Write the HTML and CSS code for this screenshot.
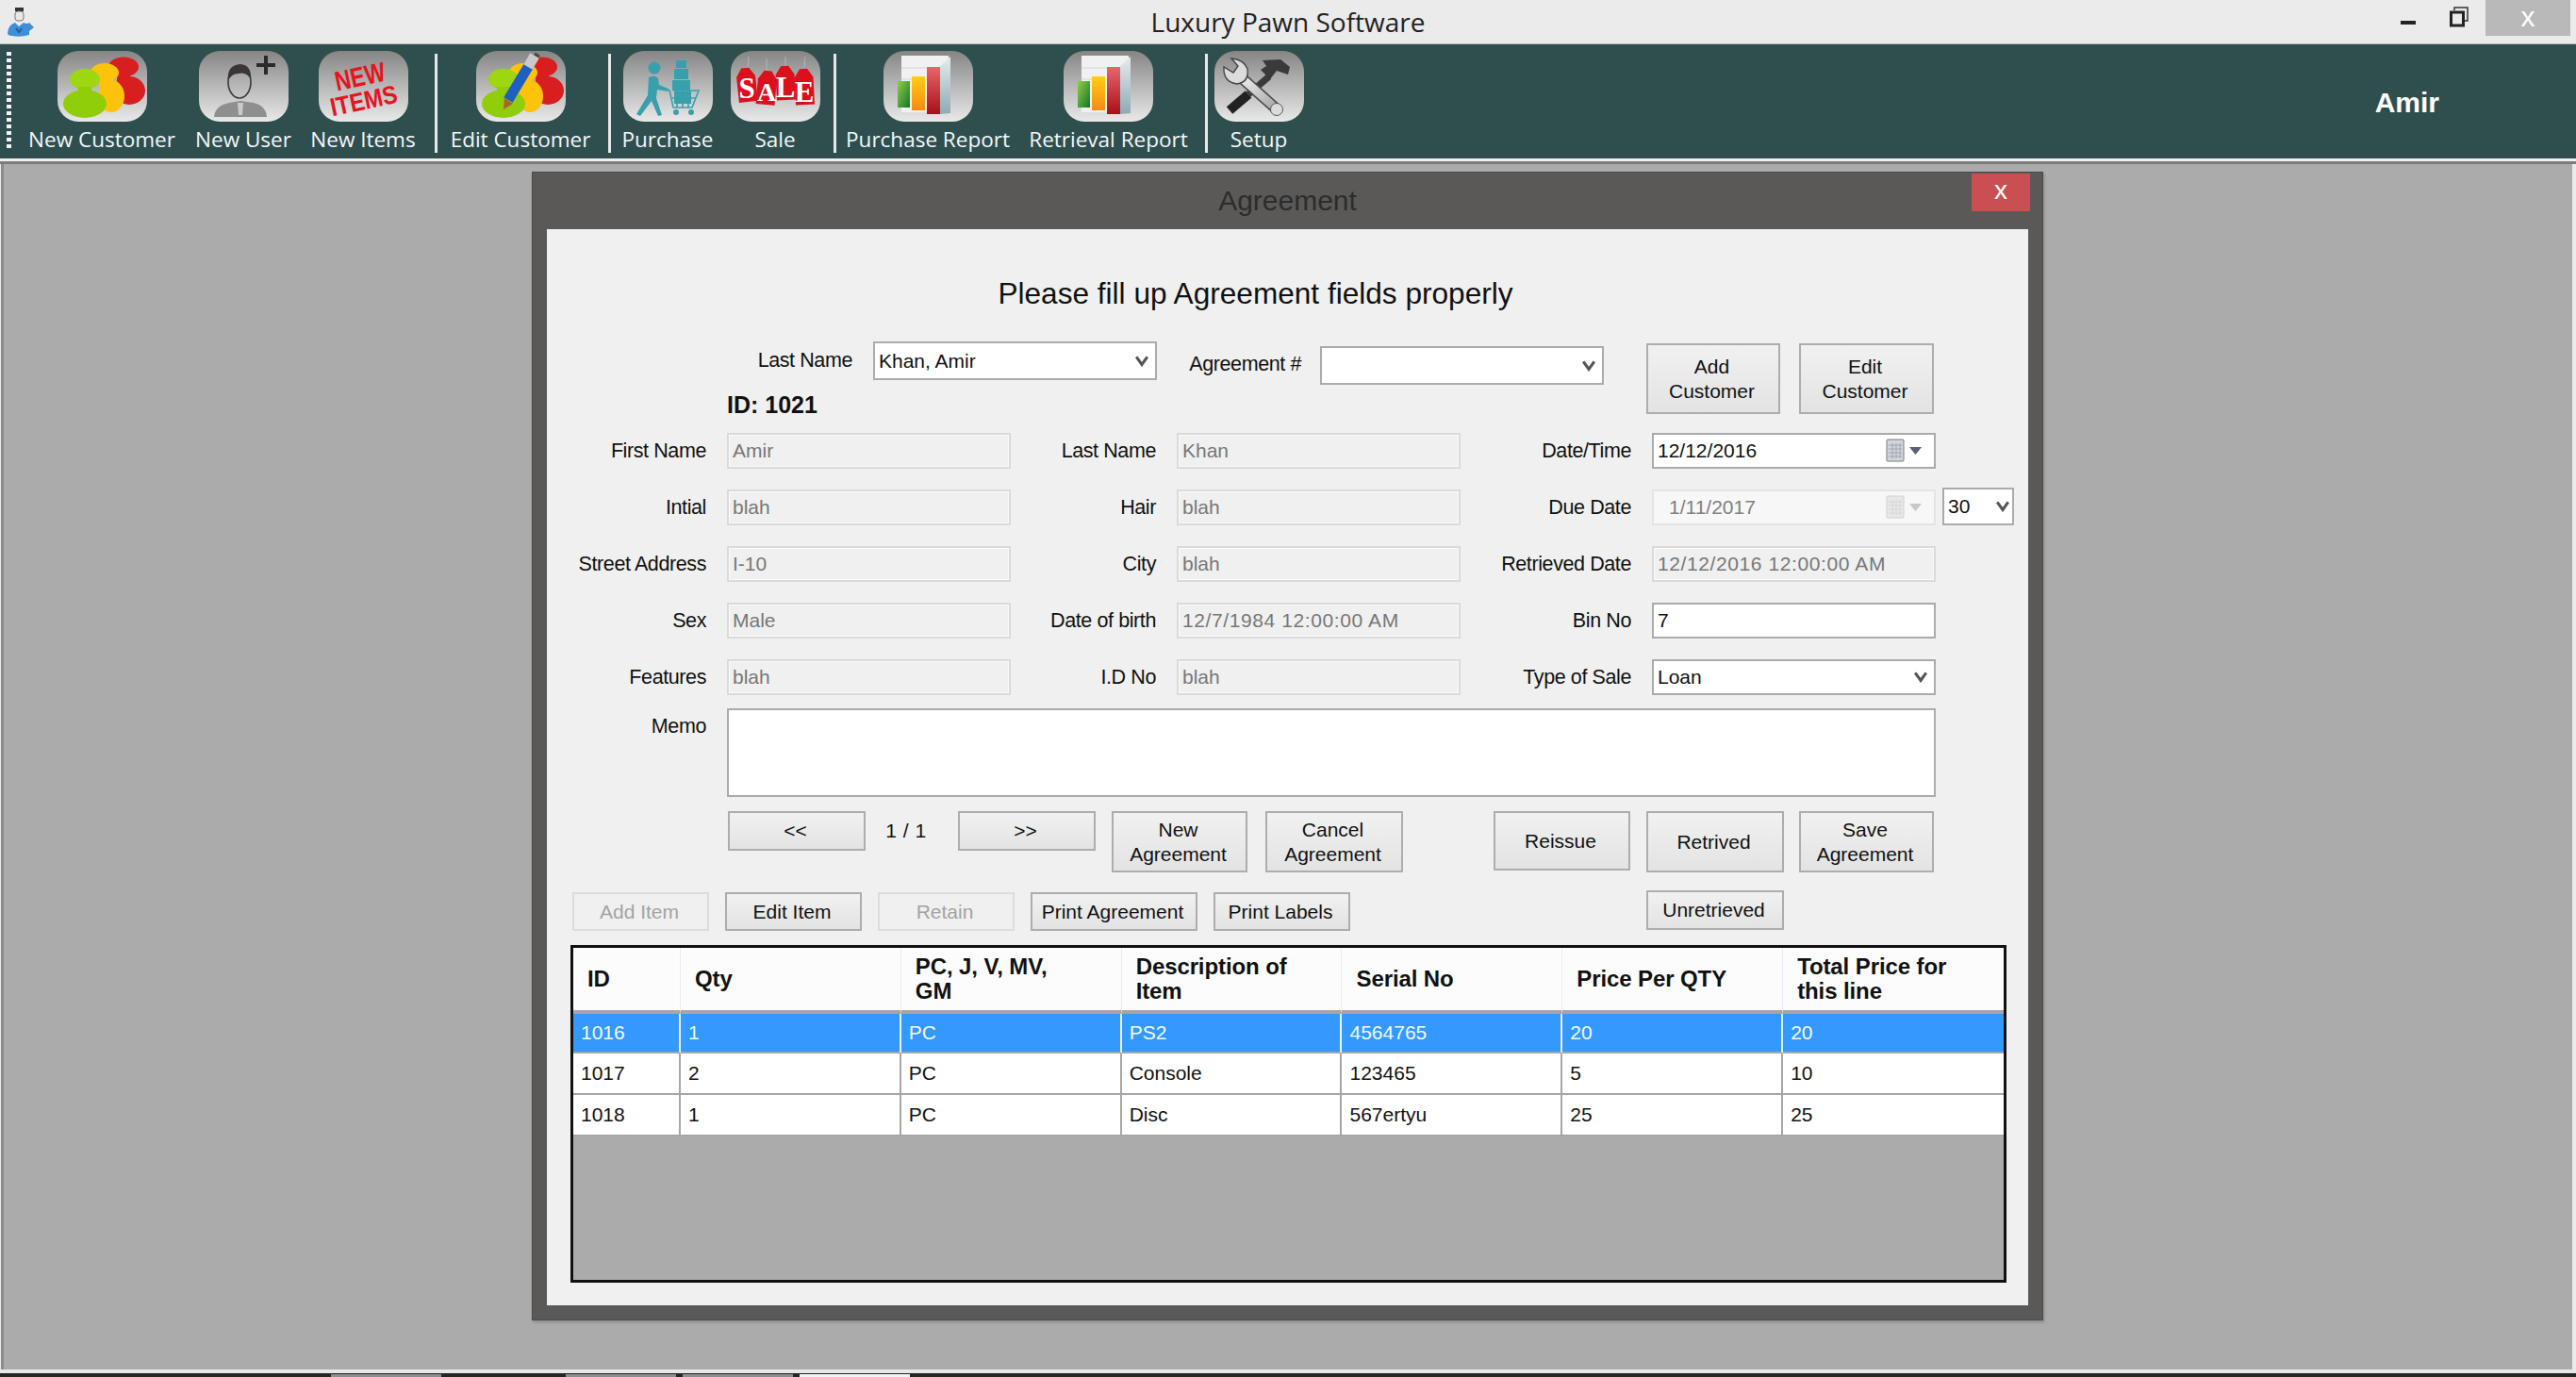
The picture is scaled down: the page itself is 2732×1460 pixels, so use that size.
FILE: index.html
```html
<!DOCTYPE html>
<html lang="en">
    <head>
        <meta charset="utf-8" />
        <title>Luxury Pawn Software</title>
        <link rel="stylesheet" href="styles.css">
    </head>
    <body>
        <!-- Window title bar -->
        <div class="titlebar">
            <svg class="app-icon" width="30" height="32" viewBox="0 0 30 32">
                <rect x="9" y="1" width="9" height="4" fill="#333"/>
                <rect x="9" y="5" width="9" height="10" rx="3" fill="#e8e8e8" stroke="#777"/>
                <path d="M1 28 Q2 19 9 17 L13 21 L18 17 Q22 19 24 17 L29 22 L24 26 L24 30 Q14 33 6 31 Q1 31 1 28Z" fill="#3f8fd8"/>
                <path d="M10 23 L13 27 L16 23" stroke="#1f5f9f" stroke-width="2" fill="none"/>
            </svg>
            <div class="app-title">Luxury Pawn Software</div>
            <div class="win-controls">
                <svg class="win-min" width="16" height="6"><rect width="16" height="4" y="1" fill="#222"/></svg>
                <svg class="win-restore" width="20" height="22" viewBox="0 0 20 22">
                    <path d="M5 4 V1 H19 V15 H15" fill="none" stroke="#333" stroke-width="1.5"/>
                    <rect x="1.5" y="6" width="13" height="14" fill="none" stroke="#222" stroke-width="3"/>
                </svg>
                <div class="win-close">x</div>
            </div>
        </div>

        <!-- Gradients shared by the report icons -->
        <svg class="defs" width="0" height="0">
            <defs>
                <linearGradient id="bar-green" x1="0" y1="0" x2="1" y2="1"><stop offset="0" stop-color="#8fcf45"/><stop offset="1" stop-color="#14752a"/></linearGradient>
                <linearGradient id="bar-orange" x1="0" y1="0" x2="0" y2="1"><stop offset="0" stop-color="#ffcf10"/><stop offset="1" stop-color="#f58a15"/></linearGradient>
                <linearGradient id="bar-red" x1="0" y1="0" x2="0" y2="1"><stop offset="0" stop-color="#e8656c"/><stop offset="1" stop-color="#a90f18"/></linearGradient>
                <linearGradient id="paper-side" x1="0" y1="0" x2="0" y2="1"><stop offset="0" stop-color="#e6ecee"/><stop offset="1" stop-color="#8fa9b3"/></linearGradient>
                <linearGradient id="wrench" x1="0" y1="0" x2="1" y2="1"><stop offset="0" stop-color="#f0f0f0"/><stop offset="1" stop-color="#a8a8a8"/></linearGradient>
            </defs>
        </svg>

        <!-- Main toolbar -->
        <div class="toolbar">
            <div class="gripper"></div>

            <div class="tool tool-new-customer">
                <div class="tool-icon">
                    <svg width="95" height="75" viewBox="0 0 95 75">
                        <g fill="#d81e1e">
                            <ellipse cx="70" cy="17" rx="16" ry="10.5"/>
                            <rect x="63" y="24" width="14" height="8"/>
                            <ellipse cx="76" cy="42" rx="17" ry="15"/>
                        </g>
                        <g fill="#fdc30a">
                            <ellipse cx="50" cy="23" rx="15" ry="10"/>
                            <rect x="44" y="30" width="13" height="8"/>
                            <ellipse cx="57" cy="48" rx="14" ry="17"/>
                        </g>
                        <g fill="#8fce08">
                            <ellipse cx="29" cy="30" rx="16" ry="11" fill="#9ed612"/>
                            <rect x="22" y="38" width="14" height="8"/>
                            <ellipse cx="29" cy="56" rx="23" ry="15"/>
                        </g>
                    </svg>
                </div>
                <div class="tool-label">New Customer</div>
            </div>
            <div class="tool tool-new-user">
                <div class="tool-icon">
                    <svg width="95" height="75" viewBox="0 0 95 75">
                        <path d="M71 5 V25 M61 15 H81" stroke="#2b2b2b" stroke-width="4"/>
                        <path d="M16 70 Q17 58 32 55 L44 53 L58 55 Q71 58 72 70Z" fill="#8f8f8f"/>
                        <path d="M41 55 L47 55 L46 68 L42 68Z" fill="#c9c9c9"/>
                        <ellipse cx="43" cy="33" rx="12" ry="17" fill="none" stroke="#3a3a3a" stroke-width="1.6"/>
                        <path d="M31 32 Q29 15 44 14 Q56 15 55 30 Q50 22 42 24 Q34 24 31 32Z" fill="#3a3636"/>
                    </svg>
                </div>
                <div class="tool-label">New User</div>
            </div>
            <div class="tool tool-new-items">
                <div class="tool-icon">
                    <svg width="95" height="75" viewBox="0 0 95 75">
                        <text x="44" y="37" transform="rotate(-12 44 28)" class="icon-text" font-size="29" textLength="54" lengthAdjust="spacingAndGlyphs" fill="#e5141f">NEW</text>
                        <text x="48" y="62" transform="rotate(-12 48 54)" class="icon-text" font-size="27" textLength="72" lengthAdjust="spacingAndGlyphs" fill="#e5141f">ITEMS</text>
                    </svg>
                </div>
                <div class="tool-label">New Items</div>
            </div>

            <div class="tool-sep sep-1"></div>

            <div class="tool tool-edit-customer">
                <div class="tool-icon">
                    <svg width="95" height="75" viewBox="0 0 95 75">
                        <g fill="#d81e1e">
                            <ellipse cx="70" cy="17" rx="16" ry="10.5"/>
                            <rect x="63" y="24" width="14" height="8"/>
                            <ellipse cx="76" cy="42" rx="17" ry="15"/>
                        </g>
                        <g fill="#fdc30a">
                            <ellipse cx="50" cy="23" rx="15" ry="10"/>
                            <rect x="44" y="30" width="13" height="8"/>
                            <ellipse cx="57" cy="48" rx="14" ry="17"/>
                        </g>
                        <g fill="#8fce08">
                            <ellipse cx="29" cy="30" rx="16" ry="11" fill="#9ed612"/>
                            <rect x="22" y="38" width="14" height="8"/>
                            <ellipse cx="29" cy="56" rx="23" ry="15"/>
                        </g>
                        <path d="M34 52 L58 12" stroke="#1f5fc4" stroke-width="11"/>
                        <path d="M55 17 L62 5" stroke="#c9c9c9" stroke-width="11"/>
                        <path d="M30 50 L29 62 L39 56Z" fill="#a8632f"/>
                        <path d="M67 6 L62 3" stroke="#444" stroke-width="3"/>
                    </svg>
                </div>
                <div class="tool-label">Edit Customer</div>
            </div>

            <div class="tool-sep sep-2"></div>

            <div class="tool tool-purchase">
                <div class="tool-icon">
                    <svg width="95" height="75" viewBox="0 0 95 75">
                        <g fill="#38a0ad">
                            <circle cx="33" cy="18" r="6.5"/>
                            <path d="M27 28 Q33 25 37 29 L38 36 L48 40 L48 43 L36 41 L35 50 L41 68 L37 69 L30 53 L18 69 L14 67 L26 47Z"/>
                            <rect x="56" y="10" width="11" height="8"/>
                            <rect x="54" y="19" width="15" height="11"/>
                            <rect x="52" y="31" width="19" height="11"/>
                            <rect x="54" y="43" width="18" height="13"/>
                            <circle cx="56" cy="65" r="3"/>
                            <circle cx="72" cy="65" r="3"/>
                        </g>
                        <path d="M49 41 L53 60 H73 L80 42 H53 M57 42 V60 M63 42 V60 M69 42 V60 M52 50 H77" fill="none" stroke="#38a0ad" stroke-width="1.6"/>
                    </svg>
                </div>
                <div class="tool-label">Purchase</div>
            </div>
            <div class="tool tool-sale">
                <div class="tool-icon">
                    <svg width="95" height="75" viewBox="0 0 95 75">
                        <path d="M18 18 L19 6 M38 21 L38 8 M58 16 L58 6 M78 18 L79 6" stroke="#b5b5b5"/>
                        <g fill="#dc0f1c">
                            <path transform="rotate(-6 17 36)" d="M7 27 L13 18 H21 L27 27 V54 H7Z"/>
                            <path transform="rotate(5 38 40)" d="M28 30 L34 21 H42 L48 30 V57 H28Z"/>
                            <path transform="rotate(-3 58 34)" d="M48 25 L54 16 H62 L68 25 V52 H48Z"/>
                            <path transform="rotate(-3 78 38)" d="M68 28 L74 19 H82 L88 28 V57 H68Z"/>
                        </g>
                        <text x="17" y="50" class="sale-text" font-size="31" fill="#fff">S</text>
                        <text x="38" y="53" class="sale-text" font-size="28" fill="#fff">A</text>
                        <text x="58" y="49" class="sale-text" font-size="31" fill="#fff">L</text>
                        <text x="78" y="54" class="sale-text" font-size="31" fill="#fff">E</text>
                    </svg>
                </div>
                <div class="tool-label">Sale</div>
            </div>

            <div class="tool-sep sep-3"></div>

            <div class="tool tool-purchase-report">
                <div class="tool-icon">
                    <svg width="95" height="75" viewBox="0 0 95 75">
                        <rect x="19" y="5" width="50" height="60" fill="#f1f1f1"/>
                        <path d="M19 18 H69 M19 30 H69" stroke="#d5d5d5"/>
                        <path d="M59 17 L71 6 V66 L59 67Z" fill="url(#paper-side)"/>
                        <rect x="15" y="32" width="13" height="28" fill="url(#bar-green)"/>
                        <rect x="30" y="27" width="14" height="36" fill="url(#bar-orange)"/>
                        <rect x="46" y="17" width="14" height="50" fill="url(#bar-red)"/>
                    </svg>
                </div>
                <div class="tool-label">Purchase Report</div>
            </div>
            <div class="tool tool-retrieval-report">
                <div class="tool-icon">
                    <svg width="95" height="75" viewBox="0 0 95 75">
                        <rect x="19" y="5" width="50" height="60" fill="#f1f1f1"/>
                        <path d="M19 18 H69 M19 30 H69" stroke="#d5d5d5"/>
                        <path d="M59 17 L71 6 V66 L59 67Z" fill="url(#paper-side)"/>
                        <rect x="15" y="32" width="13" height="28" fill="url(#bar-green)"/>
                        <rect x="30" y="27" width="14" height="36" fill="url(#bar-orange)"/>
                        <rect x="46" y="17" width="14" height="50" fill="url(#bar-red)"/>
                    </svg>
                </div>
                <div class="tool-label">Retrieval Report</div>
            </div>

            <div class="tool-sep sep-4"></div>

            <div class="tool tool-setup">
                <div class="tool-icon">
                    <svg width="95" height="75" viewBox="0 0 95 75">
                        <path d="M16 63 L36 46" stroke="#222" stroke-width="10"/>
                        <path d="M36 46 L58 27" stroke="#3a3a3a" stroke-width="7"/>
                        <path d="M51 10 L70 9 L80 17 L78 25 L66 21 L59 30 L49 20 L55 16Z" fill="#3a3a3a"/>
                        <path d="M27 27 L64 60" stroke="#4a4a4a" stroke-width="12"/>
                        <path d="M27 27 L64 60" stroke="url(#wrench)" stroke-width="9"/>
                        <path d="M10 17 Q9 33 24 35 Q37 33 35 19 Q31 9 18 8 L25 16 L20 23Z" fill="#dcdcdc" stroke="#444" stroke-width="1.4"/>
                        <circle cx="66" cy="62" r="6.5" fill="#dcdcdc" stroke="#555"/>
                    </svg>
                </div>
                <div class="tool-label">Setup</div>
            </div>

            <div class="user-name">Amir</div>
        </div>
        <div class="toolbar-edge"></div>

        <!-- MDI area -->
        <div class="mdi">
            <div class="dialog">
                <div class="dialog-title">
                    <div class="dialog-name">Agreement</div>
                    <div class="dialog-close">x</div>
                </div>
                <div class="client">
                    <div class="heading">Please fill up Agreement fields properly</div>

                    <div class="top-row">
                        <div class="top-left">
                            <div class="top-line">
                                <div class="label label-lookup">Last Name</div>
                                <div class="box combo">Khan, Amir<svg class="chevron" viewBox="0 0 12 10"><path d="M1 1 L6 8 L11 1" fill="none" stroke="#555" stroke-width="2.6"/></svg></div>
                            </div>
                            <div class="record-id">ID: 1021</div>
                        </div>
                        <div class="label label-agreement">Agreement #</div>
                        <div class="box combo combo-agreement"><svg class="chevron" viewBox="0 0 12 10"><path d="M1 1 L6 8 L11 1" fill="none" stroke="#555" stroke-width="2.6"/></svg></div>
                        <div class="btn btn-add-customer">Add<br>Customer</div>
                        <div class="btn btn-edit-customer">Edit<br>Customer</div>
                    </div>

                    <div class="fields">
                        <div class="label">First Name</div><div class="box off">Amir</div>
                        <div class="label">Last Name</div><div class="box off">Khan</div>
                        <div class="label">Date/Time</div>
                        <div class="box picker">12/12/2016
                            <svg class="cal" width="38" height="26" viewBox="0 0 38 26">
                                <rect x="1" y="1" width="18" height="23" rx="1" fill="#d3d5dc" stroke="#7a7a7a"/>
                                <path d="M3 7 H17 M3 11 H17 M3 15 H17 M3 19 H17 M7 5 V21 M11 5 V21 M15 5 V21" stroke="#a2a4b0"/>
                                <path d="M25 9 H38 L31.500 17Z" fill="#58607a"/>
                            </svg>
                        </div>
                        <div></div>

                        <div class="label">Intial</div><div class="box off">blah</div>
                        <div class="label">Hair</div><div class="box off">blah</div>
                        <div class="label">Due Date</div>
                        <div class="box picker picker-off">1/11/2017
                            <svg class="cal" width="38" height="26" viewBox="0 0 38 26">
                                <rect x="1" y="1" width="18" height="23" rx="1" fill="#e8e8e8" stroke="#d0d0d0"/>
                                <path d="M3 7 H17 M3 11 H17 M3 15 H17 M3 19 H17 M7 5 V21 M11 5 V21 M15 5 V21" stroke="#d6d6d6"/>
                                <path d="M25 9 H38 L31.500 17Z" fill="#c8c8c8"/>
                            </svg>
                        </div>
                        <div class="box combo combo-days">30<svg class="chevron" viewBox="0 0 12 10"><path d="M1 1 L6 8 L11 1" fill="none" stroke="#555" stroke-width="2.6"/></svg></div>

                        <div class="label">Street Address</div><div class="box off">I-10</div>
                        <div class="label">City</div><div class="box off">blah</div>
                        <div class="label">Retrieved Date</div><div class="box off date-value">12/12/2016 12:00:00 AM</div>
                        <div></div>

                        <div class="label">Sex</div><div class="box off">Male</div>
                        <div class="label">Date of birth</div><div class="box off date-value">12/7/1984 12:00:00 AM</div>
                        <div class="label">Bin No</div><div class="box">7</div>
                        <div></div>

                        <div class="label">Features</div><div class="box off">blah</div>
                        <div class="label">I.D No</div><div class="box off">blah</div>
                        <div class="label">Type of Sale</div>
                        <div class="box combo">Loan<svg class="chevron" viewBox="0 0 12 10"><path d="M1 1 L6 8 L11 1" fill="none" stroke="#555" stroke-width="2.6"/></svg></div>
                        <div></div>
                    </div>

                    <div class="memo-row">
                        <div class="label label-memo">Memo</div>
                        <div class="box memo"></div>
                    </div>

                    <div class="actions">
                        <div class="btn btn-pager">&lt;&lt;</div>
                        <div class="pager-text">1 / 1</div>
                        <div class="btn btn-pager">&gt;&gt;</div>
                        <div class="btn btn-new">New<br>Agreement</div>
                        <div class="btn btn-cancel">Cancel<br>Agreement</div>
                        <div class="btn btn-reissue">Reissue</div>
                        <div class="btn btn-retrived">Retrived</div>
                        <div class="btn btn-save">Save<br>Agreement</div>
                    </div>

                    <div class="items-bar">
                        <div class="btn btn-item disabled">Add Item</div>
                        <div class="btn btn-item">Edit Item</div>
                        <div class="btn btn-item disabled">Retain</div>
                        <div class="btn btn-print">Print Agreement</div>
                        <div class="btn btn-item">Print Labels</div>
                        <div class="btn btn-unretrieved">Unretrieved</div>
                    </div>

                    <div class="grid-box">
                        <table class="grid">
                            <colgroup>
                                <col class="col-id"><col class="col-wide"><col class="col-wide"><col class="col-wide"><col class="col-wide"><col class="col-wide"><col class="col-wide">
                            </colgroup>
                            <thead>
                                <tr>
                                    <th>ID</th>
                                    <th>Qty</th>
                                    <th>PC, J, V, MV,<br>GM</th>
                                    <th>Description of<br>Item</th>
                                    <th>Serial No</th>
                                    <th>Price Per QTY</th>
                                    <th>Total Price for<br>this line</th>
                                </tr>
                            </thead>
                            <tbody>
                                <tr class="selected"><td>1016</td><td>1</td><td>PC</td><td>PS2</td><td>4564765</td><td>20</td><td>20</td></tr>
                                <tr><td>1017</td><td>2</td><td>PC</td><td>Console</td><td>123465</td><td>5</td><td>10</td></tr>
                                <tr><td>1018</td><td>1</td><td>PC</td><td>Disc</td><td>567ertyu</td><td>25</td><td>25</td></tr>
                            </tbody>
                        </table>
                    </div>
                </div>
            </div>
        </div>

        <!-- Sliver of the taskbar at the bottom -->
        <div class="taskbar">
            <div class="task task-1"></div>
            <div class="task task-2"></div>
            <div class="task task-3"></div>
            <div class="task task-4"></div>
        </div>
    </body>
</html>
```
FILE: styles.css
```css
* {
    box-sizing: border-box;
}

body, html {
    margin: 0;
    padding: 0;
    height: 100%;
    overflow: hidden;
    font-family: "Liberation Sans", Arial, sans-serif;
    background: #ebebeb;
}

body {
    display: flex;
    flex-direction: column;
    height: 1460px;
}

.defs {
    position: absolute;
}

/* Window title bar */
.titlebar {
    height: 46px;
    flex: none;
    display: flex;
    align-items: flex-start;
    position: relative;
    background: #ebebeb;
}

.app-icon {
    margin: 7px 0 0 7px;
}

.app-title {
    position: absolute;
    left: 0;
    right: 0;
    top: 5px;
    text-align: center;
    font-family: "Open Sans", sans-serif;
    font-size: 28px;
    line-height: 36px;
    color: #222;
}

.win-controls {
    margin-left: auto;
    margin-right: 6px;
    display: flex;
    align-items: flex-start;
}

.win-min {
    margin-top: 21px;
    margin-right: 36px;
}

.win-restore {
    margin-top: 7px;
    margin-right: 18px;
}

.win-close {
    width: 90px;
    height: 38px;
    background: #b9b9b9;
    color: #fff;
    font-size: 30px;
    line-height: 35px;
    text-align: center;
}

/* Toolbar */
.toolbar {
    height: 122px;
    flex: none;
    display: flex;
    align-items: flex-start;
    padding-left: 22px;
    padding-right: 145px;
    position: relative;
    background: #2f4f4f;
    border-top: 1px solid #bdbdbd;
}

.gripper {
    position: absolute;
    left: 7px;
    top: 8px;
    width: 5px;
    height: 103px;
    background: repeating-linear-gradient(#f4f4f4 0, #f4f4f4 4px, #2f4f4f 4px, #2f4f4f 7px);
}

.tool {
    display: flex;
    flex-direction: column;
    align-items: center;
    padding-top: 7px;
    flex: none;
}

.tool-icon {
    width: 95px;
    height: 75px;
    border-radius: 22px;
    background: linear-gradient(#858585, #a9a9a9 35%, #e9e9e9);
}

.tool-icon svg {
    display: block;
    overflow: visible;
}

.icon-text {
    font-family: "Liberation Sans", sans-serif;
    font-weight: bold;
    text-anchor: middle;
}

.sale-text {
    font-family: "Liberation Serif", serif;
    font-weight: bold;
    text-anchor: middle;
}

.tool-label {
    margin-top: 4px;
    font-family: "Open Sans", sans-serif;
    font-size: 22.5px;
    line-height: 30px;
    color: #f2f8fa;
    white-space: nowrap;
}

.tool-new-customer { width: 172px; }
.tool-new-user { width: 128px; }
.tool-new-items { width: 126px; }
.tool-edit-customer { width: 156px; }
.tool-purchase { width: 104px; }
.tool-sale { width: 124px; }
.tool-purchase-report { width: 180px; }
.tool-retrieval-report { width: 203px; }
.tool-setup { width: 100px; }

.tool-sep {
    width: 3px;
    height: 105px;
    margin-top: 10px;
    flex: none;
    background: #e8e8e8;
}

.sep-1 { margin-left: 13px; margin-right: 10px; }
.sep-2 { margin-left: 15px; margin-right: 8px; }
.sep-3 { margin-right: 7px; }
.sep-4 { margin-left: 1px; margin-right: 4px; }

.user-name {
    margin-left: auto;
    margin-top: 44px;
    font-size: 30px;
    font-weight: bold;
    line-height: 36px;
    color: #fff;
}

.toolbar-edge {
    height: 6px;
    flex: none;
    background: linear-gradient(#f0f0f0 0, #f0f0f0 3px, #7c7c7c 3px);
}

/* MDI area */
.mdi {
    flex: 1;
    position: relative;
    margin-right: 4px;
    background: #ababab;
    border-left: 3px solid #8c8c8c;
    margin-left: 1px;
}

.dialog {
    position: absolute;
    left: 560px;
    top: 8px;
    width: 1603px;
    height: 1218px;
    padding: 0 15px;
    background: #5a5957;
    border: 1px solid #4c4b49;
    box-shadow: 1px 2px 3px rgba(0, 0, 0, 0.2);
}

.dialog-title {
    height: 60px;
    position: relative;
    text-align: center;
}

.dialog-name {
    font-size: 30px;
    line-height: 60px;
    color: #2c2c2c;
}

.dialog-close {
    position: absolute;
    right: -2px;
    top: 1px;
    width: 62px;
    height: 40px;
    background: #c94f53;
    color: #fff;
    font-size: 28px;
    line-height: 36px;
}

.client {
    height: 1141px;
    background: #f0f0f0;
    padding-top: 48px;
}

.heading {
    height: 40px;
    padding-right: 68px;
    font-size: 31.6px;
    line-height: 40px;
    text-align: center;
    color: #111;
}

/* Shared controls */
.label {
    font-size: 21.5px;
    letter-spacing: -0.4px;
    line-height: 38px;
    text-align: right;
    padding-right: 22px;
    color: #111;
    white-space: nowrap;
}

.box {
    height: 38px;
    display: flex;
    align-items: center;
    padding: 0 4px;
    font-size: 21px;
    color: #111;
    background: #fff;
    border: 2px solid #ababab;
    white-space: nowrap;
}

.box.off {
    color: #777;
    background: #f0f0f0;
    border-color: #dadada;
    box-shadow: inset 0 0 0 1px #fbfbfb;
}

.date-value {
    letter-spacing: 0.6px;
}

.chevron {
    width: 14px;
    height: 12px;
}

.combo .chevron {
    margin-left: auto;
    margin-right: 3px;
}

.picker .cal {
    margin-left: auto;
    margin-right: 9px;
}

.picker-off {
    color: #808080;
    background: #f7f7f7;
    border-color: #e4e4e4;
    padding-left: 16px;
}

.btn {
    display: flex;
    align-items: center;
    justify-content: center;
    text-align: center;
    flex: none;
    padding-right: 3px;
    font-size: 21px;
    line-height: 26px;
    color: #111;
    background: linear-gradient(#f1f1f1, #e3e3e3);
    border: 2px solid #adadad;
}

.btn.disabled {
    color: #a3a3a3;
    background: #f0f0f0;
    border-color: #dcdcdc;
}

/* Top row */
.top-row {
    display: flex;
    align-items: flex-start;
    height: 97px;
    margin-top: 31px;
}

.top-left {
    width: 647px;
    flex: none;
}

.top-line {
    display: flex;
}

.top-line .label {
    line-height: 40px;
}

.top-line .combo {
    width: 301px;
    height: 41px;
}

.label-lookup {
    width: 346px;
}

.record-id {
    margin: 12px 0 0 191px;
    font-size: 25px;
    font-weight: bold;
    line-height: 28px;
    color: #111;
}

.label-agreement {
    width: 173px;
    padding-right: 20px;
    line-height: 48px;
}

.combo-agreement {
    width: 301px;
    height: 41px;
    margin-top: 5px;
}

.btn-add-customer {
    width: 142px;
    height: 75px;
    margin: 2px 0 0 45px;
}

.btn-edit-customer {
    width: 143px;
    height: 75px;
    margin: 2px 0 0 20px;
}

/* Field grid */
.fields {
    display: grid;
    grid-template-columns: 191px 301px 176px 301px 203px 301px 83px;
    grid-auto-rows: 38px;
    row-gap: 22px;
}

.combo-days {
    width: 76px;
    height: 40px;
    margin: -2px 0 0 7px;
    padding-right: 0;
}

.memo-row {
    display: flex;
    margin-top: 14px;
}

.label-memo {
    width: 191px;
    flex: none;
}

.memo {
    width: 1282px;
    height: 94px;
}

/* Button rows */
.actions {
    display: flex;
    align-items: flex-start;
    margin: 15px 0 0 192px;
}

.btn-pager {
    width: 146px;
    height: 42px;
}

.pager-text {
    width: 98px;
    height: 42px;
    flex: none;
    padding-right: 12px;
    font-size: 21px;
    letter-spacing: 0.5px;
    line-height: 42px;
    text-align: center;
    color: #111;
}

.btn-new {
    width: 144px;
    height: 65px;
    margin-left: 17px;
}

.btn-cancel {
    width: 146px;
    height: 65px;
    margin-left: 19px;
}

.btn-reissue {
    width: 145px;
    height: 63px;
    margin-left: 96px;
}

.btn-retrived {
    width: 146px;
    height: 65px;
    margin-left: 17px;
}

.btn-save {
    width: 143px;
    height: 65px;
    margin-left: 16px;
}

.items-bar {
    display: flex;
    align-items: flex-start;
    column-gap: 17px;
    height: 41px;
    margin: 21px 0 0 27px;
}

.btn-item {
    width: 145px;
    height: 41px;
}

.btn-print {
    width: 177px;
    height: 41px;
}

.btn-unretrieved {
    width: 146px;
    height: 42px;
    margin: -2px 0 0 297px;
}

/* Data grid */
.grid-box {
    width: 1523px;
    height: 358px;
    margin: 15px 0 0 25px;
    background: #ababab;
    border: 3px solid #111;
}

.grid {
    width: 1517px;
    table-layout: fixed;
    border-collapse: separate;
    border-spacing: 0;
    font-size: 21px;
}

.col-id {
    width: 114px;
}

.grid th {
    height: 70px;
    padding: 0 15px;
    font-size: 24px;
    letter-spacing: -0.1px;
    font-weight: bold;
    line-height: 26px;
    text-align: left;
    white-space: nowrap;
    color: #111;
    background: #fcfcfc;
    border-right: 1px solid #e6edf5;
    border-bottom: 4px solid #a6a6a6;
}

.grid td {
    height: 44px;
    padding: 0 8px;
    color: #111;
    background: #fff;
    border-right: 2px solid #a6a6a6;
    border-bottom: 2px solid #a6a6a6;
}

.grid th:last-child, .grid td:last-child {
    border-right: none;
}

.grid .selected td {
    height: 42px;
    color: #f4f9ff;
    background: #3399ff;
    border-right-color: #e8f2fc;
}

/* Taskbar sliver */
.taskbar {
    height: 8px;
    flex: none;
    display: flex;
    background: linear-gradient(#e8e8e8 0, #e8e8e8 4px, #26261f 4px);
    overflow: hidden;
}

.task {
    width: 117px;
    height: 3px;
    margin-top: 5px;
    flex: none;
    background: #8e8e8e;
}

.task-1 { margin-left: 351px; }
.task-2 { margin-left: 132px; }
.task-3 { margin-left: 7px; }
.task-4 { margin-left: 7px; background: #f2f2f2; }
```
